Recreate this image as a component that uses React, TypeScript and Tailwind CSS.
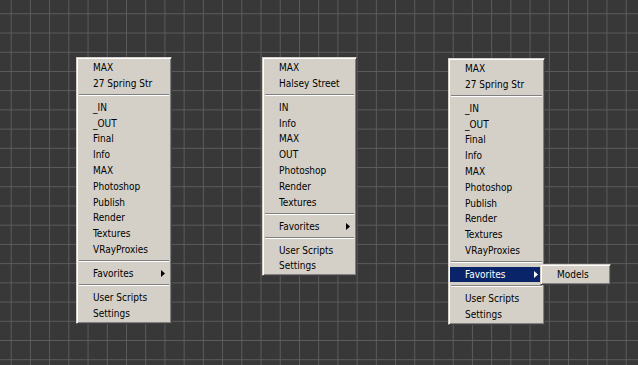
import React from "react";

type Entry = { t: "item"; label: string; sub?: boolean; active?: boolean; children?: React.ReactNode } | { t: "sep" };

const item = (label: string, sub = false, active = false, children?: React.ReactNode): Entry => ({ t: "item", label, sub, active, children });
const sep: Entry = { t: "sep" };

function Arrow({ color }: { color: string }) {
  return (
    <svg width="4" height="7" viewBox="0 0 4 7" className="block">
      <polygon points="0,0 4,3.5 0,7" fill={color} />
    </svg>
  );
}

function MenuBox({ entries, className }: { entries: Entry[]; className: string }) {
  return (
    <div
      className={`${className} bg-[#d4d0c8] border border-t-[#d4d0c8] border-l-[#d4d0c8] border-r-[#404040] border-b-[#404040] shadow-[inset_1px_1px_0_#ffffff,inset_-1px_-1px_0_#808080] px-px py-[1.6px] text-[10px] font-['DejaVu_Sans_Condensed','Liberation_Sans',sans-serif] flex flex-col`}
    >
      {entries.map((e, i) =>
        e.t === "sep" ? (
          <div key={i} className="h-[8.2px] mx-px flex items-center">
            <div className="w-full h-[2px] border-t border-t-[#808080] border-b border-b-[#ffffff]" />
          </div>
        ) : (
          <div
            key={i}
            className={`relative h-[15.8px] pl-[15px] pr-[5px] flex items-center whitespace-nowrap ${e.active ? "bg-[#0a246a] text-white" : "text-black"}`}
          >
            <span className="flex-1 leading-none pt-px">{e.label}</span>
            {e.sub && <Arrow color={e.active ? "#ffffff" : "#000000"} />}
            {e.children}
          </div>
        )
      )}
    </div>
  );
}

export default function App() {
  const m1: Entry[] = [
    item("MAX"),
    item("27 Spring Str"),
    sep,
    item("_IN"),
    item("_OUT"),
    item("Final"),
    item("Info"),
    item("MAX"),
    item("Photoshop"),
    item("Publish"),
    item("Render"),
    item("Textures"),
    item("VRayProxies"),
    sep,
    item("Favorites", true),
    sep,
    item("User Scripts"),
    item("Settings"),
  ];
  const m2: Entry[] = [
    item("MAX"),
    item("Halsey Street"),
    sep,
    item("IN"),
    item("Info"),
    item("MAX"),
    item("OUT"),
    item("Photoshop"),
    item("Render"),
    item("Textures"),
    sep,
    item("Favorites", true),
    sep,
    item("User Scripts"),
    item("Settings"),
  ];
  const submenu = (
    <div className="absolute left-[90px] top-[-2.6px] z-10">
      <MenuBox entries={[item("Models")]} className="w-[71px]" />
    </div>
  );
  const m3: Entry[] = [
    item("MAX"),
    item("27 Spring Str"),
    sep,
    item("_IN"),
    item("_OUT"),
    item("Final"),
    item("Info"),
    item("MAX"),
    item("Photoshop"),
    item("Publish"),
    item("Render"),
    item("Textures"),
    item("VRayProxies"),
    sep,
    item("Favorites", true, true, submenu),
    sep,
    item("User Scripts"),
    item("Settings"),
  ];

  return (
    <div className="w-[638px] h-[365px] overflow-hidden bg-[#383838] bg-[linear-gradient(to_right,#5c5c5c_1px,transparent_1px),linear-gradient(to_bottom,#5c5c5c_1px,transparent_1px)] bg-[size:19.23px_19.23px] bg-[position:10.7px_13.3px] flex items-start pl-[76px] pt-[57px]">
      <div className="w-[186px] shrink-0">
        <MenuBox entries={m1} className="w-[96px]" />
      </div>
      <div className="w-[186px] shrink-0">
        <MenuBox entries={m2} className="w-[95px]" />
      </div>
      <div className="w-[186px] shrink-0 mt-px">
        <MenuBox entries={m3} className="w-[97px]" />
      </div>
    </div>
  );
}
